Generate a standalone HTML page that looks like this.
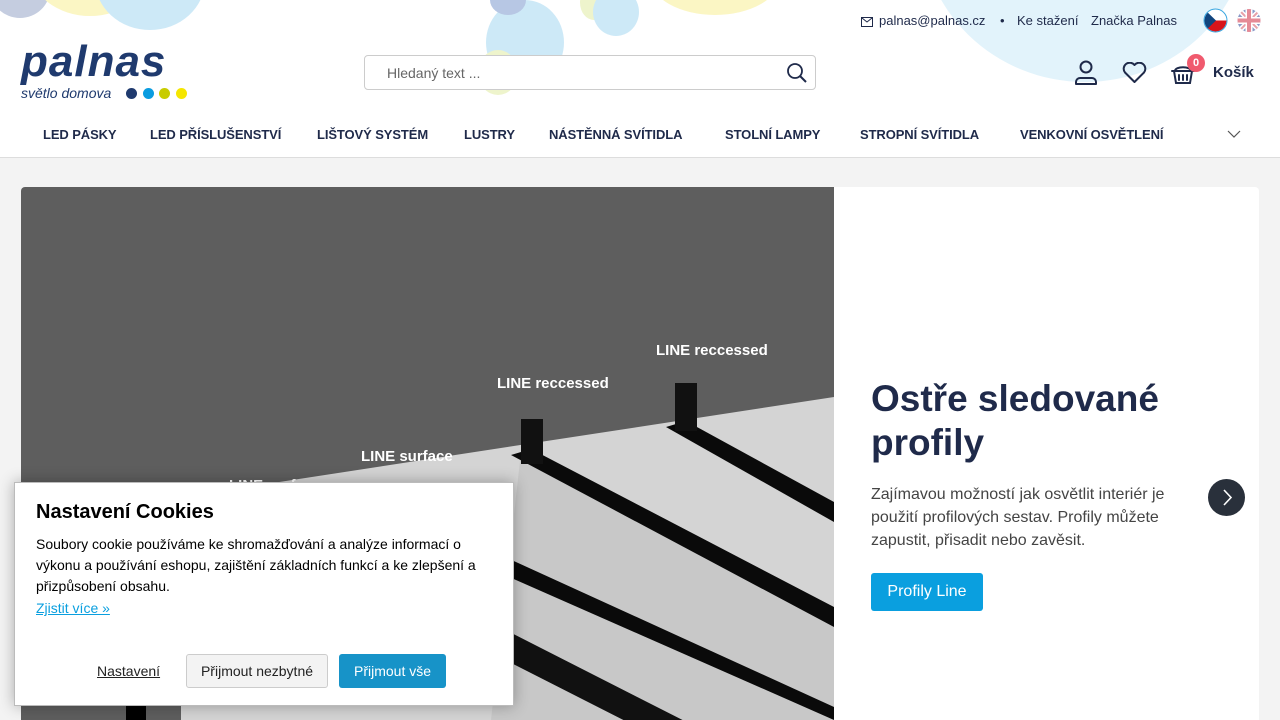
<!DOCTYPE html>
<html><head><meta charset="utf-8"><style>
*{box-sizing:border-box;margin:0;padding:0}
html,body{width:1280px;height:720px;overflow:hidden}
body{background:#f3f3f3;font-family:"Liberation Sans",sans-serif;position:relative;color:#1f2a4a}
.header{position:absolute;left:0;top:0;width:1280px;height:158px;background:#fff;border-bottom:1px solid #ddd;overflow:hidden}
.b{position:absolute;border-radius:50%}
.top{position:absolute;top:13px;font-size:13px;color:#1f2a4a}
.nav{position:absolute;top:127px;font-size:13px;font-weight:bold;color:#1f2a4a;letter-spacing:-.1px}
.search{position:absolute;left:364px;top:55px;width:452px;height:35px;border:1px solid #ccc;border-radius:4px;background:#fff;font-size:14px;color:#666;padding:9px 0 0 22px}
.hero{position:absolute;left:21px;top:187px;width:1238px;height:533px;background:#fff;border-radius:4px 4px 0 0;overflow:hidden}
.cookie{position:absolute;left:14px;top:482px;width:500px;height:224px;background:#fff;border:1px solid #bbb;box-shadow:0 0 14px rgba(0,0,0,.3);font-family:"Liberation Sans",Arial,sans-serif;color:#000}
</style></head><body>
<div class="header">
 <div class="b" style="left:-10px;top:-40px;width:60px;height:58px;background:#c5cde0"></div>
 <div class="b" style="left:30px;top:-80px;width:120px;height:96px;background:#fbf6c4"></div>
 <div class="b" style="left:95px;top:-70px;width:110px;height:100px;background:#cde9f7"></div>
 <div class="b" style="left:486px;top:0px;width:78px;height:85px;background:#cde9f7"></div>
 <div class="b" style="left:478px;top:50px;width:40px;height:45px;background:#eef4cc"></div>
 <div class="b" style="left:490px;top:-15px;width:36px;height:30px;background:#b7c7e4"></div>
 <div class="b" style="left:580px;top:-15px;width:28px;height:35px;background:#eef4cc"></div>
 <div class="b" style="left:593px;top:-12px;width:46px;height:48px;background:#cde9f7"></div>
 <div class="b" style="left:650px;top:-60px;width:130px;height:75px;background:#fbf6c4"></div>
 <div class="b" style="left:920px;top:-240px;width:330px;height:322px;background:#e2f3fb"></div>
 <div style="position:absolute;left:21px;top:40px;font-size:44px;font-weight:bold;font-style:italic;color:#1f3a6e;letter-spacing:1px;line-height:1">palnas</div>
 <div style="position:absolute;left:21px;top:85px;font-size:14px;font-style:italic;color:#1f3a6e">světlo domova</div>
 <div class="b" style="left:126px;top:88px;width:11px;height:11px;background:#1f3a6e"></div>
 <div class="b" style="left:143px;top:88px;width:11px;height:11px;background:#0a9ce0"></div>
 <div class="b" style="left:159px;top:88px;width:11px;height:11px;background:#c8cc00"></div>
 <div class="b" style="left:176px;top:88px;width:11px;height:11px;background:#f5e600"></div>
 <div class="search">Hledaný text ...</div>
 <svg style="position:absolute;left:786px;top:62px" width="22" height="22" viewBox="0 0 22 22"><circle cx="9" cy="9" r="7" fill="none" stroke="#1f2a4a" stroke-width="1.8"/><path d="M14 14l6 6" stroke="#1f2a4a" stroke-width="2"/></svg>
 <svg style="position:absolute;left:861px;top:17px" width="12" height="10"><rect x=".5" y=".5" width="11" height="9" fill="none" stroke="#1f2a4a"/><path d="M1 1l5 4 5-4" fill="none" stroke="#1f2a4a"/></svg>
 <div class="top" style="left:879px">palnas@palnas.cz</div>
 <div class="top" style="left:1000px">•</div>
 <div class="top" style="left:1017px">Ke stažení</div>
 <div class="top" style="left:1091px">Značka Palnas</div>
 <svg style="position:absolute;left:1203px;top:8px" width="25" height="25"><clipPath id="c1"><circle cx="12.5" cy="12.5" r="11"/></clipPath><g clip-path="url(#c1)"><rect width="25" height="12.5" fill="#fff"/><rect y="12.5" width="25" height="13" fill="#d7141a"/><path d="M0 0L13 12.5 0 25z" fill="#11457e"/></g><circle cx="12.5" cy="12.5" r="11.5" fill="none" stroke="#3aa7e0"/></svg>
 <svg style="position:absolute;left:1237px;top:8px" width="25" height="25"><clipPath id="c2"><circle cx="12" cy="12.5" r="11.5"/></clipPath><g clip-path="url(#c2)"><rect width="25" height="25" fill="#8a9ac7"/><path d="M0 0L25 25M25 0L0 25" stroke="#fff" stroke-width="5"/><path d="M0 0L25 25M25 0L0 25" stroke="#e8a0a8" stroke-width="2"/><path d="M12 0v25M0 12.5h25" stroke="#fff" stroke-width="7"/><path d="M12 0v25M0 12.5h25" stroke="#e58a96" stroke-width="4"/></g></svg>
 <svg style="position:absolute;left:1074px;top:60px" width="24" height="26" viewBox="0 0 24 26"><circle cx="12" cy="7" r="5.5" fill="none" stroke="#1f2a4a" stroke-width="2"/><path d="M2 24v-2a4 4 0 0 1 4-4h12a4 4 0 0 1 4 4v2z" fill="none" stroke="#1f2a4a" stroke-width="2" stroke-linejoin="round"/></svg>
 <svg style="position:absolute;left:1122px;top:62px" width="25" height="22" viewBox="0 0 25 22"><path d="M12.5 20L3 10.5A5.5 5.5 0 0 1 12.5 3a5.5 5.5 0 0 1 9.5 7.5z" fill="none" stroke="#1f2a4a" stroke-width="2" stroke-linejoin="round"/></svg>
 <svg style="position:absolute;left:1170px;top:62px" width="26" height="24" viewBox="0 0 26 24"><path d="M2 9h22M4 9l2 12h14l2-12M9 13v5M13 13v5M17 13v5" fill="none" stroke="#1f2a4a" stroke-width="2" stroke-linecap="round"/><path d="M5 9c0-5 16-5 16 0" fill="none" stroke="#1f2a4a" stroke-width="2"/></svg>
 <div class="b" style="left:1187px;top:54px;width:18px;height:18px;background:#f05a6e;color:#fff;font-size:11px;font-weight:bold;text-align:center;line-height:18px">0</div>
 <div style="position:absolute;left:1213px;top:64px;font-size:15px;font-weight:bold">Košík</div>
 <div class="nav" style="left:43px">LED PÁSKY</div>
 <div class="nav" style="left:150px">LED PŘÍSLUŠENSTVÍ</div>
 <div class="nav" style="left:317px">LIŠTOVÝ SYSTÉM</div>
 <div class="nav" style="left:464px">LUSTRY</div>
 <div class="nav" style="left:549px">NÁSTĚNNÁ SVÍTIDLA</div>
 <div class="nav" style="left:725px">STOLNÍ LAMPY</div>
 <div class="nav" style="left:860px">STROPNÍ SVÍTIDLA</div>
 <div class="nav" style="left:1020px">VENKOVNÍ OSVĚTLENÍ</div>
 <svg style="position:absolute;left:1227px;top:130px" width="14" height="8"><path d="M1 1l6 6 6-6" fill="none" stroke="#555" stroke-width="1.2"/></svg>
</div>
<div class="hero">
 <svg width="813" height="533" viewBox="0 0 813 533" style="position:absolute;left:0;top:0">
  <rect width="813" height="533" fill="#5e5e5e"/>
  <path d="M160 310L813 210V533H160z" fill="#d4d4d4"/>
  <path d="M500 265L813 430V533H470z" fill="#c8c8c8"/>
  <path d="M490 268L510 262L813 420V440z" fill="#0a0a0a"/>
  <path d="M645 240L665 234L813 315V335z" fill="#0a0a0a"/>
  <path d="M440 350L813 520V533L420 360z" fill="#0a0a0a"/>
  <path d="M400 400L813 610V640L380 420z" fill="#111"/>
  <rect x="500" y="232" width="22" height="45" fill="#111"/>
  <rect x="654" y="196" width="22" height="48" fill="#111"/>
  <rect x="105" y="500" width="20" height="40" fill="#000"/>
  <g fill="#fff" font-family="Liberation Sans,sans-serif" font-weight="bold" font-size="15">
   <text x="635" y="168">LINE reccessed</text>
   <text x="476" y="201">LINE reccessed</text>
   <text x="340" y="274">LINE surface</text>
   <text x="208" y="303">LINE surface</text>
  </g>
 </svg>
 <div style="position:absolute;left:850px;top:190px;font-size:37px;font-weight:bold;line-height:44px;color:#1f2a4a">Ostře sledované profily</div>
 <div style="position:absolute;left:850px;top:296px;width:330px;font-size:16px;line-height:23px;color:#444">Zajímavou možností jak osvětlit interiér je použití profilových sestav. Profily můžete zapustit, přisadit nebo zavěsit.</div>
 <div style="position:absolute;left:850px;top:386px;width:112px;height:38px;background:#0a9fdf;border-radius:3px;color:#fff;font-size:16px;text-align:center;line-height:38px">Profily Line</div>
 <div class="b" style="left:1187px;top:292px;width:37px;height:37px;background:#29303b"><svg width="37" height="37"><path d="M16 11l7 7.5-7 7.5" fill="none" stroke="#fff" stroke-width="1.6"/></svg></div>
</div>
<div class="cookie">
 <div style="position:absolute;left:21px;top:18px;font-size:20px;font-weight:bold">Nastavení Cookies</div>
 <div style="position:absolute;left:21px;top:51px;width:460px;font-size:14px;line-height:21px">Soubory cookie používáme ke shromažďování a analýze informací o výkonu a používání eshopu, zajištění základních funkcí a ke zlepšení a přizpůsobení obsahu.</div>
 <div style="position:absolute;left:21px;top:117px;font-size:14px;color:#0a9fdf;text-decoration:underline">Zjistit více »</div>
 <div style="position:absolute;left:82px;top:180px;font-size:14px;text-decoration:underline;color:#222">Nastavení</div>
 <div style="position:absolute;left:171px;top:171px;width:142px;height:34px;background:#f3f3f3;border:1px solid #ccc;border-radius:3px;font-size:14px;text-align:center;line-height:32px;color:#222">Přijmout nezbytné</div>
 <div style="position:absolute;left:324px;top:171px;width:107px;height:34px;background:#1793c8;border-radius:3px;font-size:14px;text-align:center;line-height:34px;color:#fff">Přijmout vše</div>
</div>
</body></html>
